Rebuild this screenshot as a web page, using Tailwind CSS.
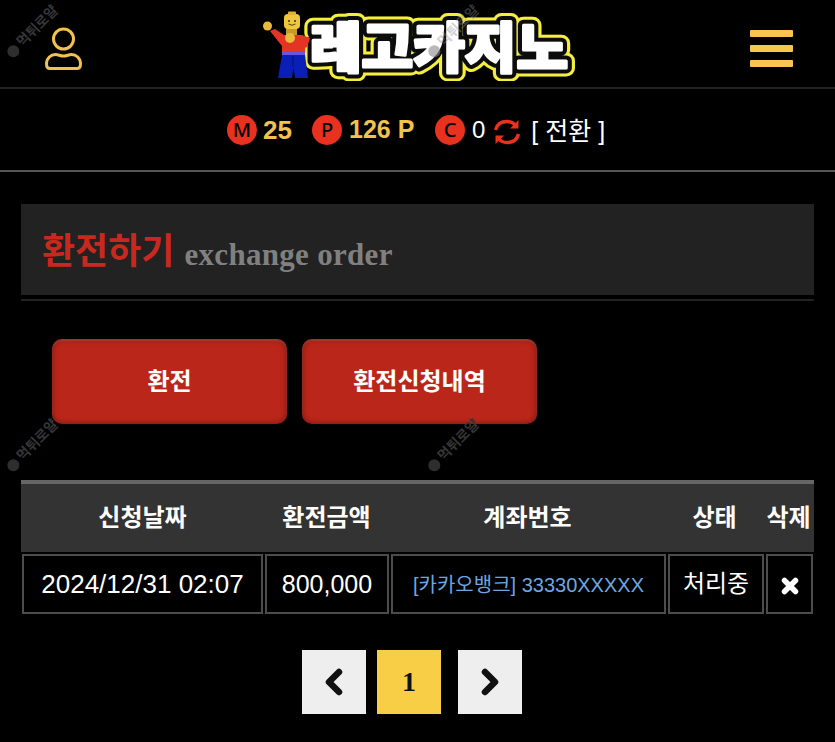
<!DOCTYPE html>
<html lang="ko">
<head>
    <meta charset="UTF-8">
    <meta name="viewport" content="width=device-width, initial-scale=1.0">
    <title>레고카지노 - 환전하기</title>
    <script src="https://cdn.jsdelivr.net/npm/@tailwindcss/browser@4"></script>
</head>
<body class="bg-black">
    <div class="relative w-[835px] h-[742px] overflow-hidden bg-black font-['Liberation_Sans','Noto_Sans_CJK_KR',sans-serif]">

        <!-- header -->
        <header class="h-[89px] border-b-2 border-[#222] flex items-center justify-between pl-[44px] pr-[42px]">
            <svg class="w-[40px] h-[44px] mt-[11px]" viewBox="0 0 40 44" fill="none" stroke="#f2c14e" stroke-width="3">
                <circle cx="19.5" cy="12" r="10"/>
                <path d="M2.500 37c0-6 4.500-9.500 9-9.500 3 0 4.500 1.500 8 1.500s5-1.500 8-1.500c4.500 0 9 3.500 9 9.500 0 3-1.500 4.500-3.500 4.500H6c-2 0-3.500-1.500-3.500-4.500z"/>
            </svg>
            <div class="w-[316px] h-[72px] ml-[2px] mt-[3px]">
                <svg viewBox="0 0 316 72" class="w-[316px] h-[72px]">
                    <g font-family="'Noto Sans CJK KR',sans-serif" font-weight="900" font-size="54">
                        <text x="50" y="59" textLength="258" lengthAdjust="spacingAndGlyphs" stroke="#f5ee3c" stroke-width="17" stroke-linejoin="round" fill="#f5ee3c">레고카지노</text>
                        <text x="50" y="59" textLength="258" lengthAdjust="spacingAndGlyphs" stroke="#0c0c0c" stroke-width="11" stroke-linejoin="round" fill="#0c0c0c">레고카지노</text>
                        <text x="50" y="59" textLength="258" lengthAdjust="spacingAndGlyphs" stroke="#fff" stroke-width="3" stroke-linejoin="round" fill="#fff">레고카지노</text>
                    </g>
                    <!-- minifig -->
                    <rect x="26" y="19" width="11" height="7" fill="#c9992a"/>
                    <rect x="24" y="5" width="16" height="15" rx="4" fill="#f0c63c"/>
                    <rect x="28" y="2.500" width="8" height="3.500" rx="1" fill="#e2b22c"/>
                    <circle cx="29" cy="12" r="0.900" fill="#222"/><circle cx="35" cy="12" r="0.900" fill="#222"/>
                    <path d="M28.500 15q3.500 2.500 7 0" stroke="#222" stroke-width="0.800" fill="none"/>
                    <path d="M10 22 L15 20 L24 26 L42 26 L50 29 L47 38 L45 39 L45 52 L22 52 L22 37z" fill="#e43524"/>
                    <circle cx="7.500" cy="17" r="4.500" fill="#e8bb3a"/>
                    <circle cx="30" cy="29" r="5" fill="#e8bb3a"/>
                    <rect x="22" y="43" width="23" height="3.500" fill="#6a55e0"/>
                    <path d="M22 46h23l3 23H35l-1.500-10-1.500 10H18z" fill="#0a1fb5"/>
                    <path d="M33 47v11" stroke="#06126e" stroke-width="1"/>
                </svg>
            </div>
            <div class="flex flex-col gap-[8px] mt-[10px]">
                <span class="block w-[43px] h-[7px] rounded-[1px] bg-[#f7c64f]"></span>
                <span class="block w-[43px] h-[7px] rounded-[1px] bg-[#f7c64f]"></span>
                <span class="block w-[43px] h-[7px] rounded-[1px] bg-[#f7c64f]"></span>
            </div>
        </header>

        <!-- points -->
        <div class="h-[83px] border-b-2 border-[#555] flex items-center pl-[227px]">
            <span class="w-[30px] h-[30px] rounded-full bg-[#e8321f] flex items-center justify-center text-black text-[20px] font-medium leading-none font-['Noto_Sans',sans-serif]">M</span>
            <span class="ml-[6px] text-[#f2c14e] text-[26px] font-bold leading-none w-[49px]">25</span>
            <span class="w-[30px] h-[30px] rounded-full bg-[#e8321f] flex items-center justify-center text-black text-[20px] font-medium leading-none font-['Noto_Sans',sans-serif]">P</span>
            <span class="ml-[7px] text-[#f2c14e] text-[25px] font-bold leading-none w-[86px]">126 P</span>
            <span class="w-[30px] h-[30px] rounded-full bg-[#e8321f] flex items-center justify-center text-black text-[20px] font-medium leading-none font-['Noto_Sans',sans-serif]">C</span>
            <span class="ml-[7px] text-white text-[24px] leading-none">0</span>
            <svg class="w-[28px] h-[28px] ml-[8px] mt-[5px]" viewBox="0 0 28 28" fill="none" stroke="#e8321f" stroke-width="3.400">
                <path d="M2.500 12C4 6 9 3.500 14 3.500c3.500 0 6.500 1.500 8.500 4"/>
                <path d="M25.500 2v8.500H17z" fill="#e8321f" stroke="none"/>
                <path d="M25.500 16C24 22 19 24.500 14 24.500c-3.500 0-6.500-1.500-8.500-4"/>
                <path d="M2.500 26v-8.500H11z" fill="#e8321f" stroke="none"/>
            </svg>
            <span class="ml-[10px] mt-[3px] text-white text-[25px] leading-none">[ 전환 ]</span>
        </div>

        <!-- title -->
        <div class="mt-[32px] mx-[21px] border-b-2 border-[#222] pb-[4px]">
            <div class="h-[91px] bg-[#222] flex items-baseline pl-[21px] pt-[23px]">
                <h2 class="text-[36px] font-bold text-[#c8281e] leading-[50px]">환전하기</h2>
                <span class="ml-[10px] translate-y-[1px] text-[31px] tracking-[0.3px] font-bold text-[#808080] font-['Liberation_Serif',serif]">exchange order</span>
            </div>
        </div>

        <!-- tabs -->
        <div class="mt-[38px] ml-[52px] flex gap-[15px]">
            <button class="w-[235px] h-[85px] rounded-[10px] bg-[#bb261a] shadow-[inset_0_0_6px_rgba(0,0,0,0.45),inset_0_2px_2px_rgba(255,255,255,0.15)] text-white text-[24px] font-bold">환전</button>
            <button class="w-[235px] h-[85px] rounded-[10px] bg-[#bb261a] shadow-[inset_0_0_6px_rgba(0,0,0,0.45),inset_0_2px_2px_rgba(255,255,255,0.15)] text-white text-[24px] font-bold">환전신청내역</button>
        </div>

        <!-- table -->
        <div class="mt-[56px] mx-[21px] border-t-4 border-[#666]">
            <div class="h-[68px] bg-[#333] grid grid-cols-[243px_125px_277px_97px_51px] items-center text-center text-white text-[24px] font-bold">
                <div>신청날짜</div>
                <div>환전금액</div>
                <div>계좌번호</div>
                <div>상태</div>
                <div class="whitespace-nowrap">삭제</div>
            </div>
            <div class="mt-[2px] ml-[1px] flex gap-[2px] h-[60px] text-white text-[24px]">
                <div class="w-[241px] border-2 border-[#4c4c4c] flex items-center justify-center pt-[1px] text-[26px]">2024/12/31 02:07</div>
                <div class="w-[124px] border-2 border-[#4c4c4c] flex items-center justify-center pt-[2px] text-[25px]">800,000</div>
                <div class="w-[275px] border-2 border-[#4c4c4c] flex items-center justify-center pt-[2px] text-[#6ea6e0] text-[20px] whitespace-nowrap">[카카오뱅크] 33330XXXXX</div>
                <div class="w-[96px] border-2 border-[#4c4c4c] flex items-center justify-center">처리중</div>
                <div class="w-[47px] border-2 border-[#4c4c4c] flex items-center justify-center">
                    <svg class="w-[18px] h-[18px] mt-[3px]" viewBox="0 0 18 18" stroke="#fff" stroke-width="5.500" stroke-linecap="round"><path d="M3.500 3.500l11 11M14.500 3.500l-11 11"/></svg>
                </div>
            </div>
        </div>

        <!-- pagination -->
        <div class="mt-[36px] ml-[302px] flex">
            <a class="w-[64px] h-[64px] bg-[#eee] flex items-center justify-center">
                <svg class="w-[20px] h-[30px]" viewBox="0 0 20 30" fill="none" stroke="#111" stroke-width="6.500" stroke-linecap="round" stroke-linejoin="round"><path d="M15 5L5 15 15 25"/></svg>
            </a>
            <a class="ml-[11px] w-[64px] h-[64px] bg-[#f8ce46] flex items-center justify-center text-[#111] text-[28px] font-bold font-['Liberation_Serif',serif]">1</a>
            <a class="ml-[17px] w-[64px] h-[64px] bg-[#eee] flex items-center justify-center">
                <svg class="w-[20px] h-[30px]" viewBox="0 0 20 30" fill="none" stroke="#111" stroke-width="6.500" stroke-linecap="round" stroke-linejoin="round"><path d="M5 5L15 15 5 25"/></svg>
            </a>
        </div>

        <!-- watermarks -->
        <span class="absolute left-[-1px] top-[21px] -rotate-45 flex items-center gap-[3px] text-[#363636] text-[14px] font-bold whitespace-nowrap"><i class="block w-[12px] h-[12px] rounded-full bg-[#2e2e2e]"></i>먹튀로얄</span>
        <span class="absolute left-[-1px] top-[435px] -rotate-45 flex items-center gap-[3px] text-[#363636] text-[14px] font-bold whitespace-nowrap"><i class="block w-[12px] h-[12px] rounded-full bg-[#2e2e2e]"></i>먹튀로얄</span>
        <span class="absolute left-[420px] top-[435px] -rotate-45 flex items-center gap-[3px] text-[#363636] text-[14px] font-bold whitespace-nowrap"><i class="block w-[12px] h-[12px] rounded-full bg-[#2e2e2e]"></i>먹튀로얄</span>
        <span class="absolute left-[420px] top-[21px] -rotate-45 flex items-center gap-[3px] text-[#8a8a8a]/40 text-[14px] font-bold whitespace-nowrap"><i class="block w-[12px] h-[12px] rounded-full bg-[#8a8a8a]/60"></i>먹튀로얄</span>
    </div>
</body>
</html>
